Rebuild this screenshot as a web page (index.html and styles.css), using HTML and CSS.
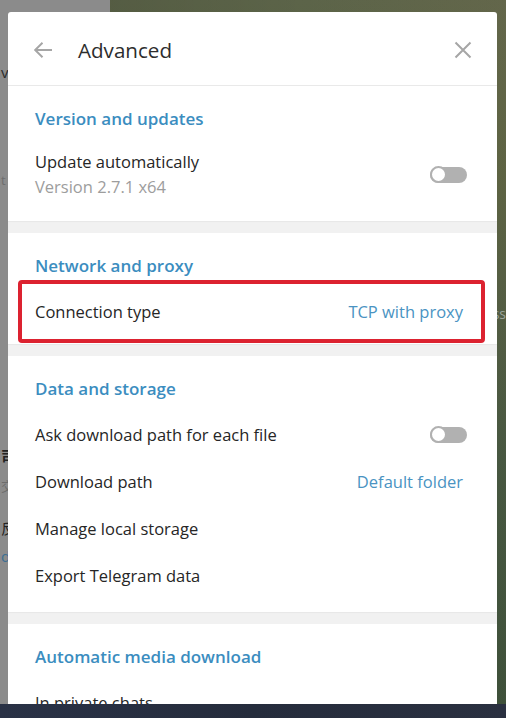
FILE: index.html
```html
<!DOCTYPE html>
<html lang="en">
<head>
<meta charset="utf-8">
<title>Advanced</title>
<link rel="stylesheet" href="styles.css">
</head>
<body>
<div class="screen">
  <div class="desktop">
    <div class="left-panel">
      <span class="peek peek-v">v</span>
      <span class="peek peek-t">t</span>
      <span class="peek peek-a">司</span>
      <span class="peek peek-b">交</span>
      <span class="peek peek-c">反</span>
      <span class="peek peek-d">d</span>
    </div>
    <div class="right-panel">
      <span class="peek-ss">ss</span>
    </div>

    <div class="dialog">
      <div class="dlg-header">
        <svg class="back" width="20" height="18" viewBox="0 0 20 18" aria-hidden="true">
          <path d="M19 9H2.5M9.5 1.8L2.2 9l7.3 7.2" fill="none" stroke="#a6a6a6" stroke-width="2"/>
        </svg>
        <div class="dlg-title">Advanced</div>
        <svg class="close" width="18" height="18" viewBox="0 0 18 18" aria-hidden="true">
          <path d="M1.5 1.5l15 15M16.5 1.5l-15 15" fill="none" stroke="#a6a6a6" stroke-width="2"/>
        </svg>
      </div>

      <div class="section s-version">
        <div class="sec-title">Version and updates</div>
        <div class="row row-2">
          <div class="row-text">
            <div class="label">Update automatically</div>
            <div class="sub">Version 2.7.1 x64</div>
          </div>
          <span class="toggle"></span>
        </div>
      </div>

      <div class="band"></div>

      <div class="section s-network">
        <div class="sec-title">Network and proxy</div>
        <div class="row">
          <div class="label">Connection type</div>
          <div class="value">TCP with proxy</div>
        </div>
        <div class="highlight"></div>
      </div>

      <div class="band"></div>

      <div class="section s-data">
        <div class="sec-title">Data and storage</div>
        <div class="row">
          <div class="label">Ask download path for each file</div>
          <span class="toggle"></span>
        </div>
        <div class="row">
          <div class="label">Download path</div>
          <div class="value">Default folder</div>
        </div>
        <div class="row">
          <div class="label">Manage local storage</div>
        </div>
        <div class="row">
          <div class="label">Export Telegram data</div>
        </div>
      </div>

      <div class="band"></div>

      <div class="section s-media">
        <div class="sec-title">Automatic media download</div>
        <div class="row">
          <div class="label">In private chats</div>
        </div>
      </div>
    </div>
  </div>
  <div class="taskbar"></div>
</div>
</body>
</html>
```

FILE: styles.css
```css
html, body {
  margin: 0;
  padding: 0;
  width: 506px;
  height: 718px;
  overflow: hidden;
}

body {
  font-family: "Open Sans", "Noto Sans", sans-serif;
  color: #262626;
}

.screen {
  width: 506px;
  height: 718px;
  display: flex;
  flex-direction: column;
}

.desktop {
  position: relative;
  flex: 1;
  display: flex;
  overflow: hidden;
}

.left-panel {
  width: 110px;
  background: #8b8b8b;
  display: flex;
  flex-direction: column;
  font-size: 15px;
  line-height: 20px;
}

.peek { display: block; padding-left: 1px; }
.peek-v { margin-top: 62px; color: #2a2a2a; }
.peek-t { margin-top: 88px; color: #6e6e6e; font-size: 13px; }
.peek-a { margin-top: 256px; color: #222; font-weight: 600; font-family: "Noto Sans CJK SC", sans-serif; }
.peek-b { margin-top: 10px; color: #6c6c6c; font-size: 13px; font-family: "Noto Sans CJK SC", sans-serif; }
.peek-c { margin-top: 22px; color: #222; font-family: "Noto Sans CJK SC", sans-serif; }
.peek-d { margin-top: 8px; color: #3d6f93; }

.right-panel {
  flex: 1;
  background:
    linear-gradient(90deg, rgba(0,0,0,0.08), rgba(255,255,255,0) 50%, rgba(120,110,80,0.25)),
    linear-gradient(180deg, #5c6449 0%, #55603f 25%, #47573f 45%, #38503c 65%, #2c4733 100%);
  display: flex;
  flex-direction: column;
  align-items: flex-end;
}

.peek-ss {
  margin-top: 304px;
  color: #9aa39a;
  font-size: 14px;
}

.taskbar {
  height: 14px;
  background: linear-gradient(90deg, #2a3246, #252c3c 50%, #2a3040);
}

/* Dialog overlay */
.dialog {
  position: absolute;
  left: 8px;
  top: 12px;
  width: 489px;
  bottom: 0;
  background: #fff;
  border-radius: 3px 3px 0 0;
  overflow: hidden;
}

.dlg-header {
  height: 74px;
  box-sizing: border-box;
  border-bottom: 1px solid #e9e9e9;
  display: flex;
  align-items: center;
  padding: 2px 25px 0 25px;
}

.back { margin-right: 25px; flex: none; }

.dlg-title {
  flex: 1;
  font-size: 20.6px;
  font-weight: 500;
  color: #2d2d2d;
  margin-top: 1px;
}

.close { flex: none; }

.section {
  position: relative;
  padding: 22px 0 12px;
}

.s-version { padding-bottom: 13px; }
.s-network { padding-bottom: 9px; }
.s-data { padding-bottom: 13px; }

.sec-title {
  padding: 0 27px;
  font-size: 17px;
  line-height: 22px;
  font-weight: 600;
  color: #3b8dbf;
  margin-bottom: 11px;
}

.row {
  height: 47px;
  display: flex;
  align-items: center;
  justify-content: space-between;
  padding: 0 34px 0 27px;
  font-size: 16.5px;
}

.row-2 {
  height: auto;
  padding-top: 10px;
  padding-bottom: 10px;
}

.label {
  line-height: 22px;
  color: #262626;
}

.sub {
  line-height: 22px;
  margin-top: 3px;
  color: #9d9d9d;
}

.value {
  color: #4a93c2;
  line-height: 22px;
}

.toggle {
  position: relative;
  width: 37px;
  height: 16px;
  border-radius: 8px;
  background: #b1b1b1;
  margin-right: -4px;
  flex: none;
}

.toggle::before {
  content: "";
  position: absolute;
  left: 0;
  top: -0.5px;
  width: 13px;
  height: 13px;
  border-radius: 50%;
  background: #fff;
  border: 2px solid #b1b1b1;
}

.band {
  height: 12px;
  background: #f1f1f1;
  box-shadow: inset 0 1px 1px rgba(0,0,0,0.04);
}

/* annotation frame over the connection row */
.highlight {
  position: absolute;
  left: 10px;
  top: 47px;
  width: 467px;
  height: 63px;
  box-sizing: border-box;
  border: 4px solid #dc2230;
  border-radius: 4px;
}
```
